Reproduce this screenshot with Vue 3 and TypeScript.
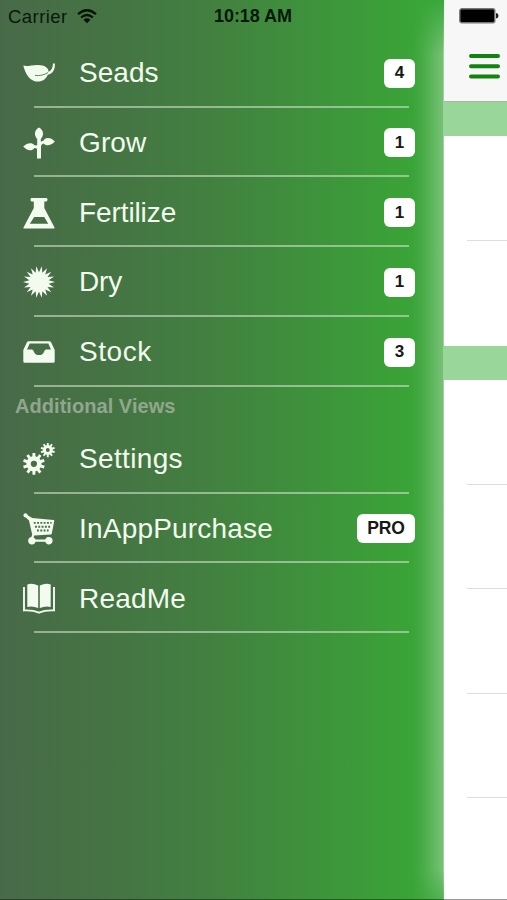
<script setup lang="ts">
interface MenuItem {
  label: string
  icon: string
  spacing: number
  badge?: string
}

const mainItems: MenuItem[] = [
  { label: 'Seads', icon: 'leaf', spacing: 0.05, badge: '4' },
  { label: 'Grow', icon: 'plant', spacing: 0.1, badge: '1' },
  { label: 'Fertilize', icon: 'flask', spacing: -0.1, badge: '1' },
  { label: 'Dry', icon: 'sun', spacing: -0.2, badge: '1' },
  { label: 'Stock', icon: 'tray', spacing: 0.55, badge: '3' },
]
const extraItems: MenuItem[] = [
  { label: 'Settings', icon: 'gears', spacing: 0.35 },
  { label: 'InAppPurchase', icon: 'cart', spacing: 0.2, badge: 'PRO' },
  { label: 'ReadMe', icon: 'book', spacing: 0.2 },
]
const sections = [
  { title: '', items: mainItems },
  { title: 'Additional Views', items: extraItems },
]

/** Star-shaped outline with alternating outer and inner radii. */
function burst(cx: number, cy: number, outer: number, inner: number, points: number): string {
  const out: string[] = []
  for (let i = 0; i < points * 2; i++) {
    const r = i % 2 ? inner : outer
    const a = (Math.PI * i) / points - Math.PI / 2 + Math.PI / points
    out.push(`${(cx + r * Math.cos(a)).toFixed(2)},${(cy + r * Math.sin(a)).toFixed(2)}`)
  }
  return `M${out.join('L')}Z`
}

/** Toothed wheel with a round hole. */
function gear(cx: number, cy: number, outer: number, inner: number, hole: number): string {
  const out: string[] = []
  const teeth = 10
  for (let i = 0; i < teeth; i++) {
    const mid = (2 * Math.PI * i) / teeth + Math.PI / 10
    const corners: [number, number][] = [[inner, -0.2], [outer, -0.13], [outer, 0.13], [inner, 0.2]]
    for (const [r, d] of corners) {
      out.push(`${(cx + r * Math.cos(mid + d)).toFixed(2)},${(cy + r * Math.sin(mid + d)).toFixed(2)}`)
    }
  }
  return `M${out.join('L')}ZM${cx - hole},${cy}a${hole},${hole} 0 1 0 ${2 * hole},0a${hole},${hole} 0 1 0 ${-2 * hole},0Z`
}

const sunPath = burst(16, 16, 16, 9.8, 18)
const gearsPath = gear(10.9, 20.8, 11, 7.6, 3.1) + gear(24.8, 7, 7.2, 4.9, 1.9)
</script>

<template>
  <main class="screen">
    <aside class="drawer">
      <header class="status">
        <span class="carrier">Carrier</span>
        <svg class="wifi" viewBox="0 0 20 15">
          <path d="M1 5.2Q10-2.6 19 5.2M4.1 8.5Q10 3.4 15.9 8.5" fill="none" stroke="#081308" stroke-width="2.3" />
          <path d="M6.5 10.7Q10 7.9 13.5 10.7L10 14.3Z" fill="#081308" />
        </svg>
        <span class="time">10:18 AM</span>
      </header>

      <section v-for="section in sections" :key="section.title">
        <h2 v-if="section.title" class="heading">{{ section.title }}</h2>
        <ul class="list">
          <li v-for="item in section.items" :key="item.label" class="row">
            <svg class="icon" viewBox="0 0 32 32">
              <g v-if="item.icon === 'leaf'">
                <path d="M.3 8.6C4 9.8 8 8.2 14.5 8C21.5 7.8 25.8 10.8 25.6 15C28.6 13.6 29.8 11 29.9 6.6L31.9 6.4C32.2 12.5 30 16.4 24.8 17.8C22.8 22.6 18.6 25.4 12.6 24.4C5.4 22.8 2.2 16 .3 8.6Z" />
                <path d="M12 18.4C17 19 21 18 25 15.6" fill="none" stroke="#63875f" stroke-width="1" />
              </g>
              <g v-else-if="item.icon === 'plant'">
                <path d="M16 .4C20.8 3 21.2 8.2 17.8 12V14.8L20.6 13.4C23 9.8 28 10.6 31.8 14.4C28 18.8 23 19.2 20.6 16.4Q18 17 18 20V31.4H14V21.6L11.4 20.9C9 24.6 4 24 .2 19.6C4 15.6 9 15.2 11.4 18.2L14.2 18.6V12C10.8 8.2 11.2 3 16 .4Z" />
              </g>
              <path v-else-if="item.icon === 'flask'" fill-rule="evenodd" d="M8.6 1H23.4Q24.5 1 24.5 2.6T23.4 4.6H21.3V11L31.5 30.5Q31.8 31.4 31 31.4H.9Q.2 31.4.5 30.5L10.8 11V4.6H8.6Q7.5 4.6 7.5 2.8T8.6 1ZM11.2 20L6.8 26.8H25.2L21.2 20Z" />
              <path v-else-if="item.icon === 'sun'" :d="sunPath" />
              <path v-else-if="item.icon === 'tray'" fill-rule="evenodd" d="M5.7 5.2H26.3Q27.6 5.2 28.2 6.4L31.7 14V25.2Q31.7 26.8 30.2 26.8H1.8Q.3 26.8.3 25.2V14L3.8 6.4Q4.4 5.2 5.7 5.2ZM6.7 7.6L4 13.6H8.8Q10.3 13.6 10.8 15.4Q12 19 16 19T21.2 15.4Q21.7 13.6 23.2 13.6H28L25.3 7.6Z" />
              <path v-else-if="item.icon === 'gears'" fill-rule="evenodd" :d="gearsPath" />
              <g v-else-if="item.icon === 'cart'">
                <path d="M.4 2.2Q.4.2 2.4.2Q4.2.2 5 2.6L9.2 4.9L30.5 6.9Q31.4 7.1 31.2 8.1L28.8 20.6Q28.6 21.6 27.8 21.6L11.2 22.6L10.6 24.6Q12.2 25.4 12.6 26.6H22.2A3.8 3.8 0 1 1 22.2 28.8H12.6A3.8 3.8 0 1 1 8.4 23.9L9.2 21.4L6 7.4L2.8 4.6Q.4 4.4.4 2.2Z" />
                <path d="M10.8 9.9H28.6M12 13.7H27.4M14 17.5H25.6" class="mesh" />
              </g>
              <g v-else>
                <path d="M4.3 1.6Q9-.2 15.2 2.4V24.9Q9 22.4 4.3 24ZM16.8 2.4Q23-.2 27.7 1.6V24Q23 22.4 16.8 24.9Z" />
                <path d="M1 4V27.4Q10 27 16 29.6Q22 27 31 27.4V4" fill="none" stroke="currentColor" stroke-width="1.9" />
              </g>
            </svg>
            <span class="label" :style="{ letterSpacing: item.spacing + 'px' }">{{ item.label }}</span>
            <span v-if="item.badge" class="badge" :class="{ wide: item.badge.length > 1 }">{{ item.badge }}</span>
          </li>
        </ul>
      </section>
    </aside>

    <section class="content">
      <header class="bar">
        <svg class="battery" viewBox="0 0 40 16">
          <rect x=".8" y=".8" width="35" height="14" rx="2" fill="#000" stroke="#777" stroke-width="1.4" />
          <path d="M37 5Q39.5 5.3 39.5 7.8T37 10.6Z" fill="#222" />
        </svg>
        <svg class="burger" viewBox="0 0 31 27">
          <path d="M2 3H29M2 13.2H29M2 23.4H29" stroke="#12830f" stroke-width="4" stroke-linecap="round" />
        </svg>
      </header>
      <div class="band"></div>
      <div class="cells short"><i></i><i></i></div>
      <div class="band"></div>
      <div class="cells"><i></i><i></i><i></i><i></i></div>
    </section>
  </main>
</template>

<style>
body {
  margin: 0;
  background: #fff;
}
</style>

<style scoped>
.screen {
  display: flex;
  box-sizing: border-box;
  width: 507px;
  height: 900px;
  overflow: hidden;
  font-family: "Liberation Sans", Arial, sans-serif;
  position: relative;
}
.screen::after {
  content: "";
  position: absolute;
  inset: auto 0 0;
  height: 1px;
  background: rgba(0, 0, 0, 0.4);
}
.drawer {
  position: relative;
  flex: none;
  width: 443.5px;
  background: linear-gradient(90deg, #486a48 0, #457344 100px, #428040 210px, #3e923c 310px, #3aa337 405px, #3aa83a 443px);
}
.drawer::after {
  content: "";
  position: absolute;
  inset: 0 0 0 auto;
  width: 32px;
  background: linear-gradient(90deg, transparent, rgba(255, 255, 255, 0.08) 35%, rgba(255, 255, 255, 0.3));
  border-right: 1px solid rgba(190, 215, 190, 0.8);
  box-sizing: border-box;
  -webkit-mask-image: linear-gradient(transparent, #000 55px, #000 870px, rgba(0, 0, 0, 0.4));
  mask-image: linear-gradient(transparent, #000 55px, #000 870px, rgba(0, 0, 0, 0.4));
}
.status {
  display: flex;
  align-items: center;
  box-sizing: border-box;
  height: 37.75px;
  padding: 0 0 4.75px 8px;
  color: #0a180a;
}
.carrier {
  width: 69px;
  font-size: 18.5px;
  letter-spacing: 0.45px;
}
.wifi {
  width: 20px;
  height: 15px;
}
.time {
  margin-left: 117px;
  font-size: 18px;
  font-weight: 700;
  letter-spacing: -0.05px;
  white-space: nowrap;
}
.list {
  margin: 0;
  padding: 0;
  list-style: none;
}
.row {
  position: relative;
  display: flex;
  align-items: center;
  box-sizing: border-box;
  height: 69.75px;
  padding: 1px 28.5px 0 23px;
  color: #f3fbef;
}
.row::after {
  content: "";
  position: absolute;
  left: 34px;
  right: 35px;
  bottom: 0;
  height: 2px;
  background: rgba(205, 225, 198, 0.6);
}
.icon {
  flex: none;
  width: 32px;
  height: 32px;
  fill: currentColor;
}
.mesh {
  fill: none;
  stroke: #476f46;
  stroke-width: 1.9;
  stroke-dasharray: 1.9 1.4;
}
.label {
  margin-left: 24px;
  font-size: 28px;
  line-height: 34px;
}
.badge {
  display: flex;
  align-items: center;
  justify-content: center;
  width: 31px;
  height: 29px;
  margin-left: auto;
  border-radius: 6px;
  background: #fff;
  color: #181818;
  font-size: 17px;
  font-weight: 700;
}
.badge.wide {
  width: 58px;
  font-size: 17.5px;
  letter-spacing: -0.2px;
}
.heading {
  box-sizing: border-box;
  height: 37.25px;
  margin: 0;
  padding: 7px 0 0 15px;
  color: #91a78d;
  font-size: 20px;
  line-height: 24px;
  letter-spacing: 0.05px;
}
.content {
  flex: 1;
  background: #fff;
}
.bar {
  display: flex;
  flex-direction: column;
  box-sizing: border-box;
  height: 101.5px;
  padding: 8px 0 0 15.5px;
  background: #f7f7f7;
  border-bottom: 1px solid #a5b5a5;
}
.battery {
  width: 40px;
  height: 16px;
}
.burger {
  width: 31px;
  height: 27px;
  margin: 29px 0 0 10px;
}
.band {
  height: 34.5px;
  background: #99d699;
}
.cells {
  padding-left: 23.5px;
}
.cells.short {
  height: 209.5px;
}
.cells i {
  display: block;
  box-sizing: border-box;
  height: 104.5px;
  border-bottom: 1.5px solid #dedede;
}
.cells.short i:last-child {
  border: 0;
}
</style>
